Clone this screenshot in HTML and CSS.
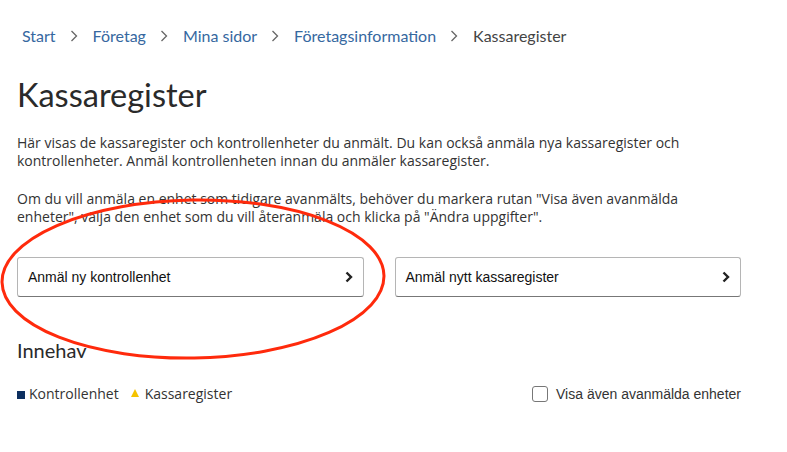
FILE: index.html
```html
<!DOCTYPE html>
<html lang="sv">
<head>
  <meta charset="UTF-8">
  <meta name="viewport" content="width=device-width, initial-scale=1.0">
  <title>Kassaregister</title>
  <link rel="stylesheet" href="styles.css">
</head>
<body>
  <div class="page">
    <nav class="breadcrumb">
      <a href="#">Start</a>
      <svg class="sep" width="9" height="12" viewBox="0 0 9 12"><polyline points="1.5,1 6.5,6 1.5,11" fill="none" stroke="#666" stroke-width="1.3"/></svg>
      <a href="#">Företag</a>
      <svg class="sep" width="9" height="12" viewBox="0 0 9 12"><polyline points="1.5,1 6.5,6 1.5,11" fill="none" stroke="#666" stroke-width="1.3"/></svg>
      <a href="#">Mina sidor</a>
      <svg class="sep" width="9" height="12" viewBox="0 0 9 12"><polyline points="1.5,1 6.5,6 1.5,11" fill="none" stroke="#666" stroke-width="1.3"/></svg>
      <a href="#">Företagsinformation</a>
      <svg class="sep" width="9" height="12" viewBox="0 0 9 12"><polyline points="1.5,1 6.5,6 1.5,11" fill="none" stroke="#666" stroke-width="1.3"/></svg>
      <span class="current">Kassaregister</span>
    </nav>

    <h1>Kassaregister</h1>

    <p>Här visas de kassaregister och kontrollenheter du anmält. Du kan också anmäla nya kassaregister och kontrollenheter. Anmäl kontrollenheten innan du anmäler kassaregister.</p>
    <p>Om du vill anmäla en enhet som tidigare avanmälts, behöver du markera rutan "Visa även avanmälda enheter", välja den enhet som du vill återanmäla och klicka på "Ändra uppgifter".</p>

    <div class="actions">
      <a class="action" href="#">
        <span>Anmäl ny kontrollenhet</span>
        <svg width="8" height="12" viewBox="0 0 8 12"><polyline points="1.5,1.5 6,6 1.5,10.5" fill="none" stroke="#222" stroke-width="2.4"/></svg>
      </a>
      <a class="action" href="#">
        <span>Anmäl nytt kassaregister</span>
        <svg width="8" height="12" viewBox="0 0 8 12"><polyline points="1.5,1.5 6,6 1.5,10.5" fill="none" stroke="#222" stroke-width="2.4"/></svg>
      </a>
    </div>

    <h2>Innehav</h2>

    <div class="legend-row">
      <div class="legend">
        <span class="mark-square"></span>
        <span>Kontrollenhet</span>
        <span class="mark-triangle"></span>
        <span>Kassaregister</span>
      </div>
      <label class="show-all">
        <input type="checkbox">
        <span>Visa även avanmälda enheter</span>
      </label>
    </div>
  </div>

  <svg class="annotation" width="787" height="452" viewBox="0 0 787 452">
    <ellipse cx="193" cy="279" rx="191" ry="79" fill="none" stroke="#ff2a0c" stroke-width="3" transform="rotate(-1 193 279)"/>
  </svg>
</body>
</html>
```

FILE: styles.css
```css
body {
  margin: 0;
  padding: 0;
  background: #fff;
  font-family: "Open Sans", sans-serif;
  color: #333;
}
.page {
  padding: 26px 46px 0 17px;
}
.breadcrumb {
  display: flex;
  align-items: center;
  gap: 14px;
  padding-left: 5px;
  font-family: Lato, sans-serif;
  font-size: 16px;
  line-height: 20px;
}
.breadcrumb a {
  color: #36689f;
  text-decoration: none;
}
.breadcrumb .current {
  color: #444;
}
h1 {
  margin: 28px 0 0;
  font-family: Lato, sans-serif;
  font-weight: 400;
  font-size: 32.5px;
  line-height: 42px;
  color: #2a2a2a;
}
p {
  margin: 20px 0 0;
  font-size: 14px;
  line-height: 18px;
  color: #333;
}
h1 + p {
  margin-top: 18px;
}
.actions {
  display: grid;
  grid-template-columns: 1fr 1fr;
  gap: 31px;
  margin-top: 31px;
}
.action {
  display: flex;
  align-items: center;
  justify-content: space-between;
  height: 40px;
  box-sizing: border-box;
  padding: 0 10px 0 10px;
  border: 1px solid #b5b5b5;
  border-bottom-color: #777;
  border-radius: 3px;
  font-family: "Liberation Sans", Arial, sans-serif;
  font-size: 14px;
  color: #111;
  text-decoration: none;
}
h2 {
  margin: 41px 0 0;
  font-family: Lato, sans-serif;
  font-weight: 400;
  font-size: 20px;
  line-height: 24px;
  color: #2a2a2a;
}
.legend-row {
  display: flex;
  justify-content: space-between;
  align-items: center;
  margin-top: 22px;
}
.legend {
  display: flex;
  align-items: center;
  font-size: 14px;
  line-height: 20px;
  color: #333;
}
.mark-square {
  width: 8px;
  height: 8px;
  margin: 1px 4px 0 0;
  background: #0d2f5f;
}
.mark-triangle {
  width: 0;
  height: 0;
  margin: 0 6px 2px 12px;
  border-left: 4px solid transparent;
  border-right: 4px solid transparent;
  border-bottom: 8px solid #f5c300;
}
.show-all {
  display: flex;
  align-items: center;
  gap: 8px;
  font-family: "Liberation Sans", Arial, sans-serif;
  font-size: 14px;
  color: #333;
}
.show-all input {
  margin: 0;
  width: 16px;
  height: 16px;
  appearance: none;
  border: 1px solid #777;
  border-radius: 3px;
  background: #fff;
}
.annotation {
  position: absolute;
  top: 0;
  left: 0;
  pointer-events: none;
}
```
